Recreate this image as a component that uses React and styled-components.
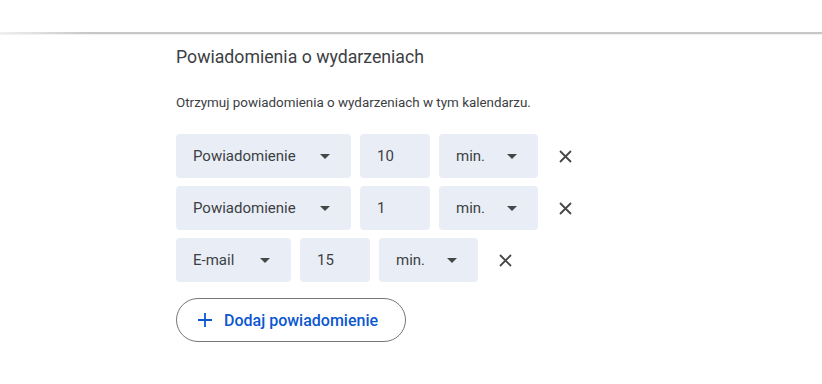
import React from 'react';
import styled, { createGlobalStyle } from 'styled-components';

const GlobalStyle = createGlobalStyle`
  body {
    margin: 0;
    background: #fff;
    font-family: Roboto, "Liberation Sans", Arial, sans-serif;
    color: #1f1f1f;
  }
`;

const Page = styled.div`
  width: 822px;
  height: 384px;
  overflow: hidden;
`;

const TopRule = styled.div`
  margin-top: 32px;
  height: 2px;
  background: linear-gradient(to right, #f0f0f0 0px, #c6c6c6 90px, #c6c6c6 100%);
  box-shadow: 0 1px 1px rgba(0, 0, 0, 0.06);
`;

const Section = styled.section`
  padding: 10px 0 0 176px;
  display: flex;
  flex-direction: column;
`;

const Title = styled.h2`
  margin: 0;
  font-size: 17.7px;
  font-weight: 400;
  line-height: 26px;
  color: #3c4043;
`;

const Subtitle = styled.p`
  margin: 23px 0 0;
  font-size: 13.4px;
  line-height: 20px;
  color: #3c4043;
`;

const Rows = styled.div`
  margin-top: 21px;
  display: flex;
  flex-direction: column;
  gap: 8px;
`;

const Row = styled.div`
  display: flex;
  align-items: center;
  gap: 9px;
`;

const Field = styled.div`
  box-sizing: border-box;
  width: ${p => p.$w}px;
  height: 44px;
  border-radius: 4px;
  background: #e9eef6;
  display: flex;
  align-items: center;
  justify-content: space-between;
  padding: 0 21px 0 17px;
  font-size: 15px;
  color: #3c4043;
`;

const Caret = styled.span`
  width: 0;
  height: 0;
  border-left: 5px solid transparent;
  border-right: 5px solid transparent;
  border-top: 5px solid #444746;
`;

const Remove = styled.button`
  margin-left: 8px;
  width: 20px;
  height: 20px;
  padding: 0;
  border: none;
  background: none;
  display: flex;
  align-items: center;
  justify-content: center;
  cursor: pointer;
`;

const AddButton = styled.button`
  margin-top: 16px;
  align-self: flex-start;
  box-sizing: border-box;
  width: 230px;
  height: 44px;
  border: 1px solid #747775;
  border-radius: 22px;
  background: #fff;
  display: flex;
  align-items: center;
  gap: 12px;
  padding: 0 0 0 21px;
  font-family: inherit;
  font-size: 16px;
  font-weight: 500;
  color: #0b57d0;
  cursor: pointer;
`;

const Select = ({ w, label }) => (
  <Field $w={w}>
    <span>{label}</span>
    <Caret />
  </Field>
);

const CloseIcon = () => (
  <svg width="13" height="13" viewBox="0 0 13 13">
    <path d="M1 1L12 12M12 1L1 12" stroke="#444746" strokeWidth="1.8" />
  </svg>
);

const rows = [
  { kind: 'Powiadomienie', kw: 175, value: '10' },
  { kind: 'Powiadomienie', kw: 175, value: '1' },
  { kind: 'E-mail', kw: 115, value: '15' },
];

export default function App() {
  return (
    <Page>
      <GlobalStyle />
      <TopRule />
      <Section>
        <Title>Powiadomienia o wydarzeniach</Title>
        <Subtitle>Otrzymuj powiadomienia o wydarzeniach w tym kalendarzu.</Subtitle>
        <Rows>
          {rows.map((r, i) => (
            <Row key={i}>
              <Select w={r.kw} label={r.kind} />
              <Field $w={70}>{r.value}</Field>
              <Select w={99} label="min." />
              <Remove aria-label="Usuń">
                <CloseIcon />
              </Remove>
            </Row>
          ))}
        </Rows>
        <AddButton>
          <svg width="14" height="14" viewBox="0 0 14 14">
            <path d="M7 0V14M0 7H14" stroke="#0b57d0" strokeWidth="1.8" />
          </svg>
          Dodaj powiadomienie
        </AddButton>
      </Section>
    </Page>
  );
}
